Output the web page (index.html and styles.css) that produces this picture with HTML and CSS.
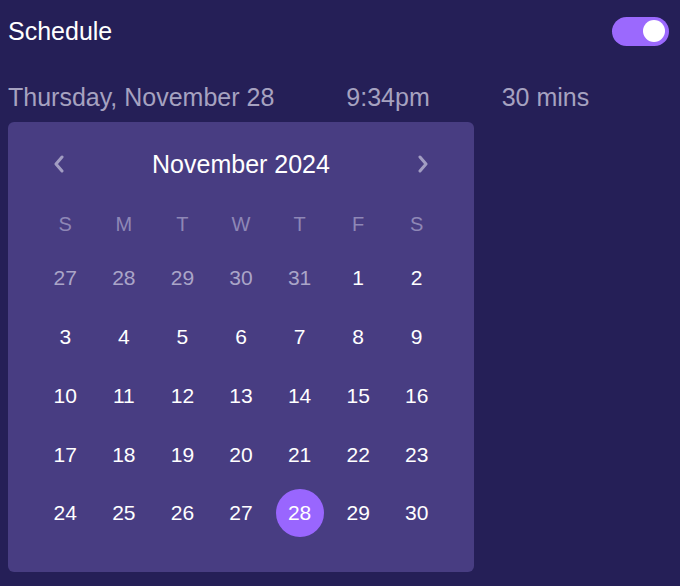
FILE: index.html
```html
<!DOCTYPE html>
<html lang="en">
<head>
<meta charset="utf-8">
<title>Schedule</title>
<link rel="stylesheet" href="styles.css">
</head>
<body>
<div class="top">
  <span class="title">Schedule</span>
  <span class="toggle"><span class="knob"></span></span>
</div>
<div class="meta">
  <span>Thursday, November 28</span>
  <span>9:34pm</span>
  <span>30 mins</span>
</div>
<div class="cal">
  <div class="cal-head">
    <span class="nav"><svg width="10" height="18" viewBox="0 0 10 18"><path d="M8 2 L2 9 L8 16" fill="none" stroke="#a29dc2" stroke-width="3" stroke-linecap="round" stroke-linejoin="round"/></svg></span>
    <span class="month">November 2024</span>
    <span class="nav"><svg width="10" height="18" viewBox="0 0 10 18"><path d="M2 2 L8 9 L2 16" fill="none" stroke="#a29dc2" stroke-width="3" stroke-linecap="round" stroke-linejoin="round"/></svg></span>
  </div>
  <div class="weekdays">
    <span>S</span><span>M</span><span>T</span><span>W</span><span>T</span><span>F</span><span>S</span>
  </div>
  <div class="days">
    <span class="out">27</span><span class="out">28</span><span class="out">29</span><span class="out">30</span><span class="out">31</span><span>1</span><span>2</span>
    <span>3</span><span>4</span><span>5</span><span>6</span><span>7</span><span>8</span><span>9</span>
    <span>10</span><span>11</span><span>12</span><span>13</span><span>14</span><span>15</span><span>16</span>
    <span>17</span><span>18</span><span>19</span><span>20</span><span>21</span><span>22</span><span>23</span>
    <span>24</span><span>25</span><span>26</span><span>27</span><span class="sel"><b>28</b></span><span>29</span><span>30</span>
  </div>
</div>
</body>
</html>
```
FILE: styles.css
```css
html, body {
  margin: 0;
  background: #251f57;
}
body {
  padding: 8px;
  font-family: "Liberation Sans", Arial, sans-serif;
  color: #ffffff;
}
.top {
  height: 46px;
  display: flex;
  align-items: center;
  justify-content: space-between;
}
.title {
  font-size: 25px;
}
.toggle {
  width: 57px;
  height: 29px;
  margin-right: 3px;
  border-radius: 15px;
  background: #9b69fd;
  display: flex;
  align-items: center;
  justify-content: flex-end;
  padding-right: 4px;
  box-sizing: border-box;
}
.knob {
  width: 22px;
  height: 22px;
  border-radius: 50%;
  background: #ffffff;
}
.meta {
  margin-top: 29px;
  display: flex;
  gap: 72px;
  font-size: 25px;
  line-height: 28px;
  color: #a6a2c0;
}
.cal {
  margin-top: 11px;
  width: 466px;
  height: 450px;
  box-sizing: border-box;
  padding: 22px 28px 30px;
  background: #483d82;
  border-radius: 6px;
}
.cal-head {
  height: 40px;
  display: flex;
  align-items: center;
  justify-content: space-between;
}
.nav {
  width: 46px;
  display: flex;
  justify-content: center;
}
.month {
  font-size: 25px;
}
.weekdays {
  margin-top: 15px;
  height: 50px;
  display: grid;
  grid-template-columns: repeat(7, 1fr);
  align-items: center;
  justify-items: center;
  font-size: 20px;
  color: #8e87b6;
}
.days {
  display: grid;
  grid-template-columns: repeat(7, 1fr);
  grid-auto-rows: 58.75px;
  align-items: center;
  justify-items: center;
  font-size: 21px;
}
.days .out {
  color: #aaa5c8;
}
.days .sel b {
  font-weight: normal;
  width: 48px;
  height: 48px;
  border-radius: 50%;
  background: #9966fe;
  display: flex;
  align-items: center;
  justify-content: center;
}
```
